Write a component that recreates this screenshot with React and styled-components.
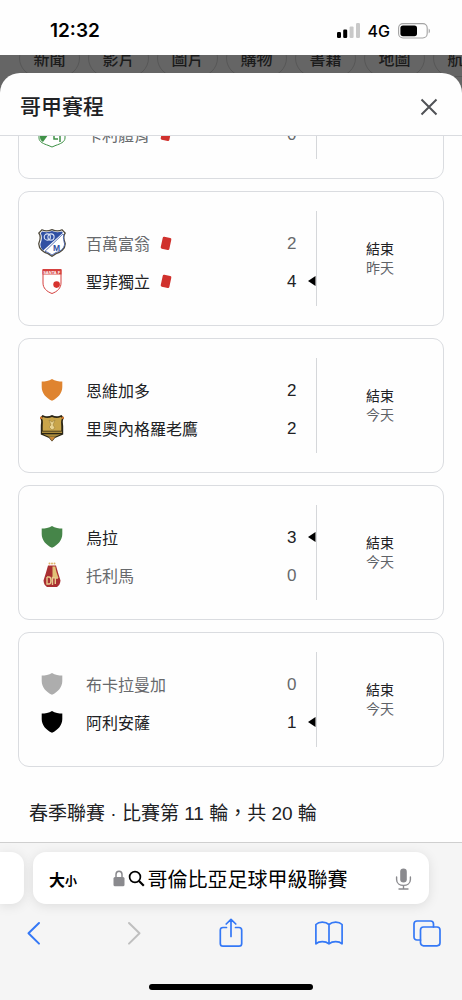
import React from 'react';
import styled, {createGlobalStyle} from "styled-components";

const GlobalStyle = createGlobalStyle`
  * {
    box-sizing: border-box;
  }

  body {
    margin: 0;
    background: #fefefe;
    font-family: "Liberation Sans", "Noto Sans CJK TC", sans-serif;
    color: #202124;
  }

  button {
    border: 0;
    padding: 0;
    background: none;
    color: inherit;
    font-family: inherit;
    cursor: pointer;
  }

  svg {
    display: block;
  }
`

const Screen = styled.div`
  height: 100vh;
  display: flex;
  flex-direction: column;
  overflow: hidden;
`

const StatusBar = styled.header`
  height: 55px;
  flex: none;
  display: flex;
  align-items: center;
  justify-content: space-between;
  padding: 6px 31px 0 50px;
  font-family: Inter, sans-serif;
  color: #000;
`

const Clock = styled.div`
  font-size: 19px;
  font-weight: 600;
`

const StatusIcons = styled.div`
  display: flex;
  align-items: center;
  gap: 8px;
  font-size: 16px;
  font-weight: 500;
`

const Backdrop = styled.nav`
  height: 40px;
  flex: none;
  display: flex;
  align-items: flex-end;
  gap: 8px;
  padding: 0 19px 18px;
  background: #656565;
  overflow: hidden;
`

const Chip = styled.button`
  && {
    flex: none;
    width: 61px;
    height: 38px;
    border: 1px solid #575757;
    border-radius: 19px;
    font-size: 16px;
    font-weight: 500;
    color: #1b1b1b;
  }
`

const Sheet = styled.main`
  flex: 1;
  min-height: 0;
  display: flex;
  flex-direction: column;
  margin-top: -22px;
  background: #fefefe;
  border-radius: 20px 20px 0 0;
  overflow: hidden;
`

const SheetHeader = styled.div`
  height: 63px;
  flex: none;
  display: flex;
  align-items: center;
  justify-content: space-between;
  padding: 6px 24px 0 20px;
  border-bottom: 1px solid #dadce0;
`

const Title = styled.h1`
  margin: 0;
  font-size: 21px;
  line-height: 30px;
  font-weight: 500;
`

// список прокручений донизу
const MatchList = styled.div`
  flex: 1;
  min-height: 0;
  display: flex;
  flex-direction: column;
  justify-content: flex-end;
  gap: 12px;
  padding: 0 18px;
  overflow: hidden;
`

const Card = styled.article`
  flex: none;
  display: flex;
  padding: 19px 0;
  border: 1px solid #dadce0;
  border-radius: 11px;
`

const Teams = styled.div`
  flex: 1;
  min-height: 95px;
  display: flex;
  flex-direction: column;
  justify-content: flex-end;
  padding-bottom: 6px;
  border-right: 1px solid #d5d7da;
`

const TeamRow = styled.div`
  height: 38px;
  display: grid;
  grid-template-columns: 28px 1fr 21px 8px;
  align-items: center;
  padding-left: 19px;
  font-size: 16px;
  color: ${({$lost}) => $lost ? '#67696c' : '#202124'};
`

const TeamName = styled.div`
  display: flex;
  align-items: center;
  gap: 10px;
  padding-left: 20px;
`

const Score = styled.div`
  padding-top: 2px;
  font-size: 17px;
`

const MatchStatus = styled.div`
  width: 126px;
  display: flex;
  flex-direction: column;
  align-items: center;
  justify-content: center;
  font-size: 14px;
  line-height: 19px;
`

const Day = styled.span`
  color: #5f6368;
`

const Round = styled.p`
  flex: none;
  margin: 0;
  padding: 23px 11px 16px;
  font-size: 19px;
  line-height: 24px;
`

const BrowserBar = styled.footer`
  flex: none;
  background: #f5f5f5;
  border-top: 1px solid #cfcfcf;
`

const AddressRow = styled.div`
  display: flex;
  gap: 9px;
  padding: 9px 33px 0 0;
`

const PrevTab = styled.div`
  width: 24px;
  height: 52px;
  background: #fff;
  border-radius: 0 13px 13px 0;
  box-shadow: 0 2px 12px rgba(0, 0, 0, 0.1);
`

const AddressBar = styled.div`
  flex: 1;
  min-width: 0;
  height: 52px;
  display: flex;
  align-items: center;
  padding: 1px 17px 0 16px;
  background: #fff;
  border-radius: 13px;
  box-shadow: 0 2px 12px rgba(0, 0, 0, 0.1);
  color: #000;
`

const TextSize = styled.button`
  display: flex;
  align-items: baseline;
  margin-right: auto;
  font-size: 16px;
  font-weight: 700;

  small {
    font-size: 12px;
  }
`

const Address = styled.label`
  display: flex;
  align-items: center;
  gap: 3px;
`

const AddressInput = styled.input`
  width: 212px;
  border: 0;
  padding: 2px 0 0;
  outline: 0;
  background: none;
  font-family: inherit;
  font-size: 20px;
  line-height: 30px;
  color: #000;
`

const MicButton = styled.button`
  margin-left: auto;
`

const Toolbar = styled.nav`
  display: flex;
  justify-content: space-between;
  padding: 14px 21px 0 20px;
  color: #3478f6;
`

const ToolButton = styled.button`
  width: 28px;
  height: 30px;
  display: flex;
  align-items: center;
  justify-content: center;

  &:disabled {
    color: #bfbfbf;
  }
`

const HomeIndicator = styled.div`
  width: 164px;
  height: 6px;
  margin: 36px auto 10px;
  border-radius: 3px;
  background: #000;
`

const Signal = () => (
    <svg width="23" height="15" viewBox="0 0 23 15">
        <rect x="0" y="9" width="4" height="6" rx="1.2" fill="#000"/>
        <rect x="6.2" y="6.5" width="4" height="8.5" rx="1.2" fill="#000"/>
        <rect x="12.6" y="3.4" width="4" height="11.6" rx="1.2" fill="#c9c9c9"/>
        <rect x="19" y="0" width="4" height="15" rx="1.2" fill="#c9c9c9"/>
    </svg>
)

const Battery = () => (
    <svg width="33" height="16" viewBox="0 0 33 16">
        <rect x=".6" y=".6" width="28.6" height="14.4" rx="4.4" fill="none" stroke="#a3a3a3" strokeWidth="1.1"/>
        <rect x="2.4" y="2.4" width="16.6" height="10.8" rx="2.6" fill="#000"/>
        <path d="M30.7 5.4c1.6.7 1.6 4.1 0 4.8z" fill="#a3a3a3"/>
    </svg>
)

const RedCard = () => (
    <svg width="12" height="15" viewBox="0 0 12 15">
        <rect x="1.6" y="1.3" width="8.8" height="12.2" rx="1.4" fill="#d0312d" transform="rotate(12 6 7.5)"/>
    </svg>
)

const Shield = ({color}) => (
    <svg width="28" height="28" viewBox="0 0 28 28">
        <path d="M14 3C11 4.800 7 5.500 3.700 5.600V11c0 6 4.300 11.200 10.300 13.700 6-2.500 10.300-7.700 10.300-13.700V5.600C21 5.500 17 4.800 14 3z"
              fill={color}/>
    </svg>
)

const CaliCrest = () => (
    <svg width="28" height="28" viewBox="0 0 28 28">
        <path d="M1 3h26v15c0 4-5 6-9 7.300L14 27l-4-1.700C6 24 1 22 1 18z" fill="#fff" stroke="#3f9147"/>
        <path d="M2 4h16L5 22c-2-1-3-3-3-5z" fill="#3f9147"/>
        <path d="M16 14v5h4M22 16v6" fill="none" stroke="#3f9147" strokeWidth="1.500"/>
    </svg>
)

const MillonariosCrest = () => (
    <svg width="28" height="28" viewBox="0 0 28 28">
        <path d="M4 .8C7 2.400 11 2 14 .6c3 1.400 7 1.800 10 .2L27.200 4c-2.400 3-1.400 7 0 10.500C27.500 20 22 23.500 18 24.600L14 27.300l-4-2.700C6 23.500.5 20 .8 14.500 2.200 11 3.200 7 .8 4z"
              fill="#fff" stroke="#514b3d" strokeWidth="1.300"/>
        <path d="M4.300 2.500C8 3.700 11 3.300 14 2.100c3 1.200 6 1.600 9.600.4l1.300 1.300L5.200 21.400c-2-1.700-2.900-4-2.800-6.500C4 11 4.500 7 2.700 4.200z"
              fill="#3150a3"/>
        <path d="M25.700 6c-.8 3 .2 6 .9 9-.4 5-5 7.500-8.700 8.500L14 26l-4-2.500-3-1.200L24.900 5z" fill="#fff"
              stroke="#3150a3" strokeWidth=".8"/>
        <circle cx="9.300" cy="8" r="3.100" fill="none" stroke="#dce4f5" strokeWidth="1.100"/>
        <circle cx="13" cy="8" r="3.100" fill="none" stroke="#dce4f5" strokeWidth="1.100"/>
        <text x="15" y="21.500" fontSize="8.500" fontWeight="700" fill="#3150a3">M</text>
    </svg>
)

const SantaFeCrest = () => (
    <svg width="28" height="28" viewBox="0 0 28 28">
        <path d="M5 3h18v13c0 5-3.500 8.500-9 10.500C8.500 24.500 5 21 5 16z" fill="#fff" stroke="#d5413f"/>
        <path d="M4.500 2h19v5.500h-19z" fill="#d5413f"/>
        <text x="5.200" y="6.500" fontSize="4" fontWeight="700" fill="#fff">SANTA F</text>
        <circle cx="18.600" cy="17.600" r="3.300" fill="#d7332f"/>
    </svg>
)

const AguilasCrest = () => (
    <svg width="28" height="28" viewBox="0 0 28 28">
        <path d="M4.500 1C8 3 11 2.600 14 1c3 1.600 6 2 9.500 0L26 4c-2 3-.8 5-.8 8v8.500L17 24l-3 3.500L11 24l-8.200-3.500V12c0-3 1.200-5-.8-8z"
              fill="#2a2515"/>
        <path d="M5 3c3.500 1.500 6 1 9 0 3 1 5.500 1.500 9 0l1 1.500c-1.500 3-.7 5-.7 8v4.300H4.700v-4.300c0-3 .8-5-.7-8z"
              fill="#c9a54a"/>
        <path d="M4 17.500h20v1.600H4zM5 20.300h18l-6 2.500h-6z" fill="#a98a3c"/>
        <path d="M11 23h6l-3 4z" fill="#c98736"/>
        <path d="M11 6l3 2 3-2-2 5 2 3-3 2-3-3 2-2z" fill="#e9d391" stroke="#8f7534" strokeWidth=".5"/>
        <circle cx="3.200" cy="3.800" r="1.200" fill="#d4762c"/>
        <circle cx="24.800" cy="3.800" r="1.200" fill="#d4762c"/>
    </svg>
)

const TolimaCrest = () => (
    <svg width="28" height="28" viewBox="0 0 28 28">
        <path d="M10 4.500h8c1.500 5 2.700 10 4.500 15-.2 3-1.400 5.200-3.500 6.500H9c-2.100-1.300-3.300-3.500-3.500-6.500 1.800-5 3-10 4.500-15z"
              fill="#a92f32"/>
        <path d="M14.500 5.500h2.800c.5 4 1.700 7.500 3.200 11.500l-6-1z" fill="#e2c177"/>
        <path d="M9 16v7h2c2.600 0 2.600-7 0-7H9M14.500 24v-7.500l5.500.5M17.300 17v6" fill="none" stroke="#e8c98c"
              strokeWidth="1.400"/>
        <circle cx="11.500" cy="2.500" r="1" fill="#dfb568"/>
        <circle cx="14" cy="2.500" r="1" fill="#dfb568"/>
        <circle cx="16.500" cy="2.500" r="1" fill="#dfb568"/>
    </svg>
)

const chips = ['新聞', '影片', '圖片', '購物', '書籍', '地圖', '航班']

const matches = [
    {
        teams: [{name: '卡利體育', score: 0, crest: <CaliCrest/>, red: true, lost: true}]
    },
    {
        day: '昨天',
        teams: [
            {name: '百萬富翁', score: 2, crest: <MillonariosCrest/>, red: true, lost: true},
            {name: '聖菲獨立', score: 4, crest: <SantaFeCrest/>, red: true, won: true}
        ]
    },
    {
        day: '今天',
        teams: [
            {name: '恩維加多', score: 2, crest: <Shield color="#df8430"/>},
            {name: '里奧內格羅老鷹', score: 2, crest: <AguilasCrest/>}
        ]
    },
    {
        day: '今天',
        teams: [
            {name: '烏拉', score: 3, crest: <Shield color="#468549"/>, won: true},
            {name: '托利馬', score: 0, crest: <TolimaCrest/>, lost: true}
        ]
    },
    {
        day: '今天',
        teams: [
            {name: '布卡拉曼加', score: 0, crest: <Shield color="#adadad"/>, lost: true},
            {name: '阿利安薩', score: 1, crest: <Shield color="#000"/>, won: true}
        ]
    }
]

const Team = ({team}) => (
    <TeamRow $lost={team.lost}>
        {team.crest}
        <TeamName>{team.name}{team.red && <RedCard/>}</TeamName>
        <Score>{team.score}</Score>
        {team.won && <svg width="8" height="10" viewBox="0 0 8 10"><path d="M7.500 0v10L0 5z" fill="#000"/></svg>}
    </TeamRow>
)

const Match = ({match}) => (
    <Card>
        <Teams>
            {match.teams.map((team) => <Team key={team.name} team={team}/>)}
        </Teams>
        <MatchStatus>
            {match.day && <>
                <span>結束</span>
                <Day>{match.day}</Day>
            </>}
        </MatchStatus>
    </Card>
)

const Line = ({width = 28, height = 30, children}) => (
    <svg width={width} height={height} viewBox={`0 0 ${width} ${height}`} fill="none" stroke="currentColor"
         strokeWidth="1.7" strokeLinecap="round" strokeLinejoin="round">{children}</svg>
)

const App = () => {
    return (
        <>
            <GlobalStyle/>
            <Screen>
                <StatusBar>
                    <Clock>12:32</Clock>
                    <StatusIcons>
                        <Signal/>
                        4G
                        <Battery/>
                    </StatusIcons>
                </StatusBar>

                <Backdrop>
                    {chips.map((chip) => <Chip key={chip}>{chip}</Chip>)}
                </Backdrop>

                <Sheet>
                    <SheetHeader>
                        <Title>哥甲賽程</Title>
                        <button aria-label="關閉">
                            <svg width="18" height="18" viewBox="0 0 18 18" stroke="#505256" strokeWidth="2">
                                <path d="M1.500 1.500l15 15M16.500 1.500l-15 15"/>
                            </svg>
                        </button>
                    </SheetHeader>
                    <MatchList>
                        {matches.map((match, i) => <Match key={i} match={match}/>)}
                        <Round>春季聯賽 · 比賽第 11 輪，共 20 輪</Round>
                    </MatchList>
                </Sheet>

                <BrowserBar>
                    <AddressRow>
                        <PrevTab/>
                        <AddressBar>
                            <TextSize>大<small>小</small></TextSize>
                            <Address>
                                <svg width="12" height="17" viewBox="0 0 12 17">
                                    <path d="M3 8V4.600C3 .2 9 .2 9 4.600V8" fill="none" stroke="#8a8a8e"
                                          strokeWidth="1.500"/>
                                    <rect x=".5" y="7" width="11" height="9.200" rx="1.500" fill="#8a8a8e"/>
                                </svg>
                                <svg width="17" height="17" viewBox="0 0 17 17" fill="none" stroke="#000">
                                    <circle cx="7" cy="7" r="5.400" strokeWidth="1.700"/>
                                    <path d="M11 11l4.800 4.800" strokeWidth="2.200"/>
                                </svg>
                                <AddressInput aria-label="網址" defaultValue="哥倫比亞足球甲級聯賽"/>
                            </Address>
                            <MicButton aria-label="語音輸入">
                                <svg width="17" height="24" viewBox="0 0 17 24" fill="none" stroke="#8a8a8e"
                                     strokeWidth="1.400" strokeLinecap="round">
                                    <rect x="5.200" y="1.500" width="6.600" height="14" rx="3.300" fill="#8a8a8e"
                                          stroke="none"/>
                                    <path d="M1.600 10v2.400c0 8 13.800 8 13.800 0V10M8.500 18.500V22M4 22h9"/>
                                </svg>
                            </MicButton>
                        </AddressBar>
                    </AddressRow>
                    <Toolbar>
                        <ToolButton aria-label="返回"><Line><path d="M19 5L8.500 15.300 19 25.600" strokeWidth="2"/></Line></ToolButton>
                        <ToolButton aria-label="前進" disabled><Line><path d="M11 5l10.500 10.300L11 25.600" strokeWidth="2"/></Line></ToolButton>
                        <ToolButton aria-label="分享">
                            <Line>
                                <path d="M9.500 9.500H6c-1.700 0-2.700 1-2.700 2.700v13.300c0 1.700 1 2.700 2.700 2.700h16c1.700 0 2.700-1 2.700-2.700V12.200c0-1.700-1-2.700-2.700-2.700h-3.500M14 18.500V1.500M9.200 6L14 1.300 18.800 6"/>
                            </Line>
                        </ToolButton>
                        <ToolButton aria-label="書籤">
                            <Line>
                                <path d="M14 6.500v19.300M14 6.500C10.500 3.400 4 3.400.9 6.500v19.300C4 23 10.500 23 14 25.800c3.500-2.800 10-2.800 13.100 0V6.500C24 3.400 17.500 3.400 14 6.500z"/>
                            </Line>
                        </ToolButton>
                        <ToolButton aria-label="分頁">
                            <Line>
                                <path d="M7.500 22H4c-1.900 0-3-1.100-3-3V6c0-1.900 1.100-3 3-3h13.500c1.900 0 3 1.100 3 3v3"/>
                                <rect x="7.500" y="9" width="19.500" height="18.800" rx="3"/>
                            </Line>
                        </ToolButton>
                    </Toolbar>
                    <HomeIndicator/>
                </BrowserBar>
            </Screen>
        </>
    )
}

export default App;
